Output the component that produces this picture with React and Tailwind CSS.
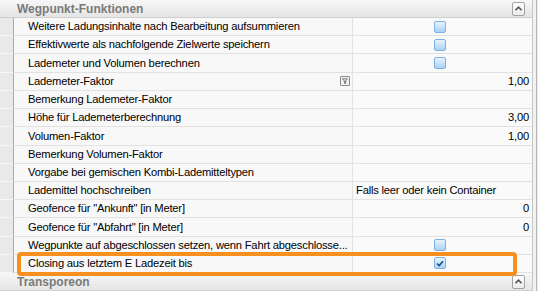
const ROWS = [
  { label: 'Weitere Ladungsinhalte nach Bearbeitung aufsummieren', kind: 'check' },
  { label: 'Effektivwerte als nachfolgende Zielwerte speichern', kind: 'check' },
  { label: 'Lademeter und Volumen berechnen', kind: 'check' },
  { label: 'Lademeter-Faktor', kind: 'num', value: '1,00', filter: true },
  { label: 'Bemerkung Lademeter-Faktor' },
  { label: 'Höhe für Lademeterberechnung', kind: 'num', value: '3,00' },
  { label: 'Volumen-Faktor', kind: 'num', value: '1,00' },
  { label: 'Bemerkung Volumen-Faktor' },
  { label: 'Vorgabe bei gemischen Kombi-Lademitteltypen' },
  { label: 'Lademittel hochschreiben', kind: 'text', value: 'Falls leer oder kein Container' },
  { label: 'Geofence für "Ankunft" [in Meter]', kind: 'num', value: '0' },
  { label: 'Geofence für "Abfahrt" [in Meter]', kind: 'num', value: '0' },
  { label: 'Wegpunkte auf abgeschlossen setzen, wenn Fahrt abgeschlosse...', kind: 'check' },
  { label: 'Closing aus letztem E Ladezeit bis', kind: 'check', checked: true },
]

function CollapseButton() {
  return (
    <div className="w-[13px] h-[14px] rounded-[2px] border border-[#a3a3a3] bg-gradient-to-b from-white to-[#ececec] flex items-center justify-center">
      <svg width="7" height="5" viewBox="0 0 7 5">
        <path d="M0.5 4.2 L3.5 1.2 L6.5 4.2" fill="none" stroke="#555" strokeWidth="1.6" />
      </svg>
    </div>
  )
}

function SectionHeader({ title }) {
  return (
    <div className="h-[18px] flex items-center justify-between pl-[17px] pr-[7px] bg-gradient-to-b from-[#f7f7f7] to-[#e5e5e5] border-b border-[#cfcfcf]">
      <span className="font-bold text-[12px] tracking-normal text-[#7a7a7a]">{title}</span>
      <CollapseButton />
    </div>
  )
}

function CheckBox({ checked }) {
  return (
    <div className="w-[12px] h-[12px] rounded-[2px] border border-[#7fb1e2] bg-gradient-to-b from-[#e8f4ff] to-[#a9d2f5] flex items-center justify-center">
      {checked && (
        <svg width="8" height="7" viewBox="0 0 8 7">
          <path d="M1 3.5 L3.2 5.6 L7 1.2" fill="none" stroke="#1d4f8f" strokeWidth="1.7" />
        </svg>
      )}
    </div>
  )
}

function FilterIcon() {
  return (
    <div className="w-[10px] h-[10px] border border-[#8a8a8a] rounded-[1px] bg-[#f4f4f4] flex items-center justify-center">
      <svg width="6" height="6" viewBox="0 0 6 6">
        <path d="M0.5 0.8 H5.5 L3.6 3 V5.4 H2.4 V3 Z" fill="none" stroke="#666" strokeWidth="0.9" />
      </svg>
    </div>
  )
}

function Row({ row }) {
  return (
    <div className="flex h-[18.3px]">
      <div className="w-[13px] shrink-0 bg-[#e9e9e9] border-b border-[#f6f6f6]" />
      <div className="w-[339px] shrink-0 flex items-center justify-between pl-[14px] pr-[2px] bg-[#f8f8f8] border-l border-[#a9a9a9] border-b border-b-[#e2e2e2] overflow-hidden whitespace-nowrap">
        <span>{row.label}</span>
        {row.filter && <FilterIcon />}
      </div>
      <div className="flex-1 flex items-center bg-[#fafafa] border-l border-[#e2e2e2] border-b pr-[3px] whitespace-nowrap">
        {row.kind === 'check' && (
          <div className="flex-1 flex justify-center pr-[2px]">
            <CheckBox checked={row.checked} />
          </div>
        )}
        {row.kind === 'num' && <span className="flex-1 text-right">{row.value}</span>}
        {row.kind === 'text' && <span className="pl-[3px]">{row.value}</span>}
      </div>
    </div>
  )
}

export default function App() {
  return (
    <div className="relative w-[538px] h-[291px] overflow-hidden bg-[#efefef] text-[11.2px] tracking-[-0.2px] text-black font-['Tahoma','Liberation_Sans',sans-serif]">
      <div className="flex h-full">
        <div className="w-[533px] shrink-0 flex flex-col border-r border-[#c6c6c6]">
          <SectionHeader title="Wegpunkt-Funktionen" />
          {ROWS.map(row => (
            <Row key={row.label} row={row} />
          ))}
          <SectionHeader title="Transporeon" />
        </div>
        <div className="w-[3px] bg-[#f2f2f2]" />
        <div className="w-[1px] bg-[#b5b5b5]" />
      </div>

      {/* highlight around the last option */}
      <div className="absolute left-[17px] top-[252px] w-[500px] h-[24px] border-[4px] border-[#f7901e] rounded-[4px]" />
    </div>
  )
}
